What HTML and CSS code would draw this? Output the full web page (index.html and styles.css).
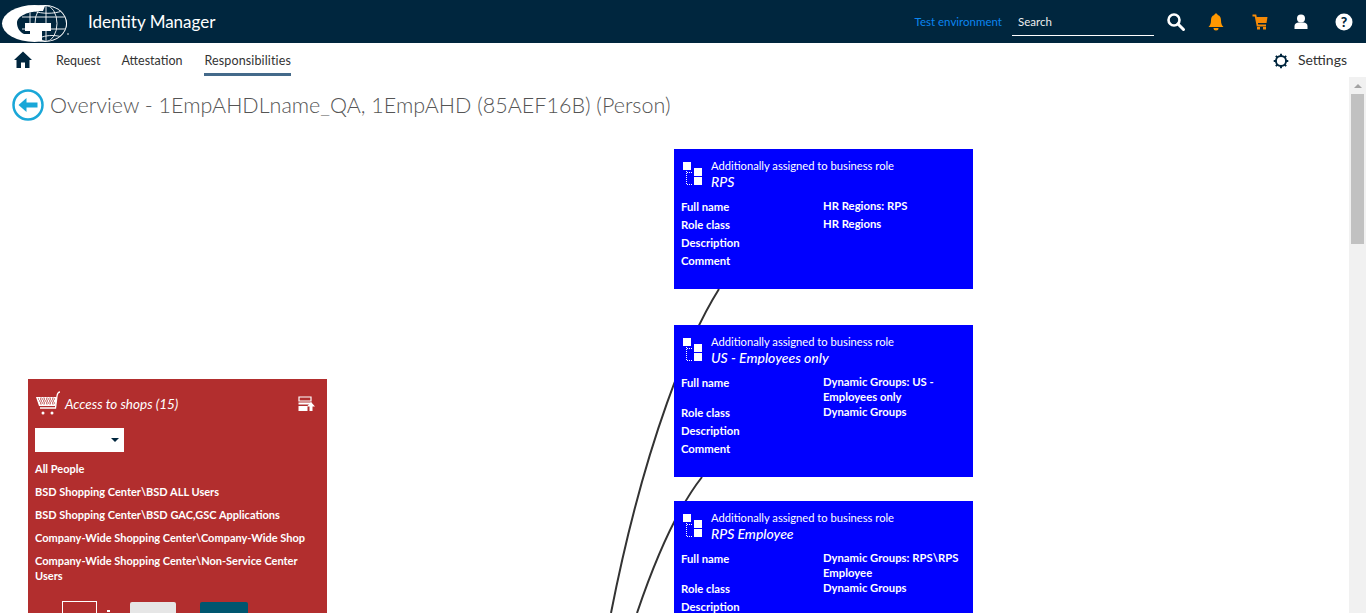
FILE: index.html
```html
<!DOCTYPE html>
<html lang="en">
<head>
  <meta charset="UTF-8">
  <title>Identity Manager</title>
  <link rel="stylesheet" href="styles.css">
</head>
<body>
  <header class="topbar">
    <svg class="logo" viewBox="0 0 70 43" width="70" height="43">
      <defs>
        <clipPath id="globe-clip">
          <path d="M45 6C57 6 66 14 66 23.500S57 41 45 41L42 40V31H30V34H24C20 32 17 28 17 23C17 16 28 11 43 11z"/>
        </clipPath>
      </defs>
      <ellipse cx="34.500" cy="23.500" rx="32.500" ry="18.500" fill="#fff"/>
      <ellipse cx="45" cy="23.500" rx="22" ry="18.500" fill="#fff"/>
      <path d="M45 6C57 6 66 14 66 23.500S57 41 45 41L42 40V31H30V34H24C20 32 17 28 17 23C17 16 28 11 43 11z" fill="#00263e"/>
      <g clip-path="url(#globe-clip)" fill="none" stroke="#fff" stroke-width="0.900">
        <ellipse cx="46" cy="23.500" rx="11" ry="18"/>
        <path d="M46 5v37M22 17h45M22 29h45M34 11c8 3 20 3 28 0M42 37c6-2 14-2 20 0M30 11v12"/>
      </g>
      <path d="M25 23h26v8H41v10H30V31h-5z" fill="#fff"/>
      <circle cx="68" cy="34" r="0.800" fill="#fff"/>
    </svg>
    <span class="app-name">Identity Manager</span>
    <span class="env-label">Test environment</span>
    <div class="search-box">Search</div>
    <nav class="top-icons">
      <svg width="20" height="20" viewBox="0 0 20 20"><circle cx="8" cy="8" r="5.500" fill="none" stroke="#fff" stroke-width="2.600"/><path d="M12 12l5.500 5.500" stroke="#fff" stroke-width="3" stroke-linecap="round"/></svg>
      <svg width="20" height="20" viewBox="2 0 20 20"><path d="M10 1.500c1 0 1.600.7 1.700 1.500 2.500.8 3.300 3 3.300 5.500 0 3 .8 5 2.500 6.500H2.500c1.700-1.500 2.500-3.500 2.500-6.500 0-2.500.8-4.700 3.300-5.500.1-.8.7-1.500 1.700-1.500z" fill="#ff9800"/><path d="M7.500 16h5a2.500 2.500 0 0 1-5 0z" fill="#ff9800"/></svg>
      <svg width="20" height="20" viewBox="0 0 20 20"><path d="M2.500 3.500h3l2 10h8.500" fill="none" stroke="#f58a07" stroke-width="1.800"/><path d="M6 5h11.500l-1 6H7z" fill="#f58a07"/><rect x="7" y="15" width="3" height="2.500" fill="#f58a07"/><rect x="13" y="15" width="3" height="2.500" fill="#f58a07"/></svg>
      <svg width="20" height="20" viewBox="1 0 20 20"><circle cx="10" cy="6.500" r="4" fill="#fff"/><path d="M3.500 17v-3c0-2 2-3.500 4-3.500h5c2 0 4 1.500 4 3.500v3z" fill="#fff"/></svg>
      <svg width="20" height="20" viewBox="0 0 20 20"><circle cx="10" cy="10" r="8.500" fill="#fff"/><text x="10" y="15" class="help-mark">?</text></svg>
    </nav>
  </header>

  <div class="subnav">
    <svg class="home" width="20" height="20" viewBox="0 0 20 20"><path d="M10 1.500L1 10h2.500v8h4.500v-5.500h4V18h4.500v-8H19z" fill="#00263e"/></svg>
    <a class="tab">Request</a>
    <a class="tab">Attestation</a>
    <a class="tab active">Responsibilities</a>
    <div class="settings">
      <svg width="16" height="16" viewBox="0 0 18 18"><circle cx="9" cy="9" r="5.700" fill="none" stroke="#00263e" stroke-width="2.200"/><path d="M9 .8v2.500M9 14.700v2.500M.8 9h2.500M14.700 9h2.500M3.200 3.200L5 5M13 13l1.800 1.800M3.200 14.800L5 13M13 5l1.800-1.800" stroke="#00263e" stroke-width="2.200"/></svg>
      <span>Settings</span>
    </div>
  </div>

  <div class="page">
    <main class="content">
      <div class="title-row">
        <svg width="34" height="34" viewBox="0 0 34 34"><circle cx="17" cy="17" r="14.500" fill="none" stroke="#1aa7d8" stroke-width="2.500"/><path d="M7.500 17l8-7v4.500h11v5h-11V24z" fill="#1aa7d8"/></svg>
        <h1>Overview - 1EmpAHDLname_QA, 1EmpAHD (85AEF16B) (Person)</h1>
      </div>

      <div class="diagram">
        <svg class="links" width="1349" height="478" viewBox="0 135 1349 478">
          <path d="M719 289C690 335 645 440 611 613" />
          <path d="M702 477C680 505 660 545 637 613" />
        </svg>

        <section class="node shops">
          <div class="shops-head">
            <svg width="26" height="26" viewBox="0 0 26 26">
              <path d="M25 1c-2 0-2.500 1-3 4l-1.500 12H5" fill="none" stroke="#fff" stroke-width="1.300"/>
              <path d="M1 6h21l-1.500 9H4z" fill="#fff"/>
              <path d="M3 8h17M4 10h16M5 12h15M6 6.500v8M9 6.500v8M12 6.500v8M15 6.500v8M18 6.500v8" stroke="#b22e2e" stroke-width="1" stroke-dasharray="1 1"/>
              <circle cx="8" cy="22" r="1.500" fill="#fff"/><circle cx="17" cy="22" r="1.500" fill="#fff"/>
            </svg>
            <h2>Access to shops (15)</h2>
            <svg class="export" width="17" height="16" viewBox="0 0 17 16">
              <path d="M1 1h12v4H1z" fill="none" stroke="#fff" stroke-width="1.200"/>
              <rect x="0.500" y="6.500" width="13" height="2" fill="#fff"/>
              <rect x="0.500" y="10" width="9" height="5" fill="#fff"/>
              <path d="M13 6l4 4.500h-2.500V15h-3v-4.500H9z" fill="#fff"/>
            </svg>
          </div>
          <div class="select-box"></div>
          <ul class="shop-list">
            <li>All People</li>
            <li>BSD Shopping Center\BSD ALL Users</li>
            <li>BSD Shopping Center\BSD GAC,GSC Applications</li>
            <li>Company-Wide Shopping Center\Company-Wide Shop</li>
            <li>Company-Wide Shopping Center\Non-Service Center Users</li>
          </ul>
          <div class="pager">
            <span class="page-box"></span>
            <span class="page-of"></span>
            <span class="page-btn"></span>
            <span class="page-btn next"></span>
          </div>
        </section>

        <section class="node role role-rps">
          <div class="role-head">
            <svg class="tree" width="20" height="24" viewBox="0 0 20 24"><use href="#tree-icon"/></svg>
            <div>
              <div class="role-type">Additionally assigned to business role</div>
              <div class="role-name">RPS</div>
            </div>
          </div>
          <dl class="role-props">
            <dt>Full name</dt><dd>HR Regions: RPS</dd>
            <dt>Role class</dt><dd>HR Regions</dd>
            <dt>Description</dt><dd></dd>
            <dt>Comment</dt><dd></dd>
          </dl>
        </section>

        <section class="node role role-us">
          <div class="role-head">
            <svg class="tree" width="20" height="24" viewBox="0 0 20 24"><use href="#tree-icon"/></svg>
            <div>
              <div class="role-type">Additionally assigned to business role</div>
              <div class="role-name">US - Employees only</div>
            </div>
          </div>
          <dl class="role-props">
            <dt>Full name</dt><dd>Dynamic Groups: US - Employees only</dd>
            <dt>Role class</dt><dd>Dynamic Groups</dd>
            <dt>Description</dt><dd></dd>
            <dt>Comment</dt><dd></dd>
          </dl>
        </section>

        <section class="node role role-emp">
          <div class="role-head">
            <svg class="tree" width="20" height="24" viewBox="0 0 20 24"><use href="#tree-icon"/></svg>
            <div>
              <div class="role-type">Additionally assigned to business role</div>
              <div class="role-name">RPS Employee</div>
            </div>
          </div>
          <dl class="role-props">
            <dt>Full name</dt><dd>Dynamic Groups: RPS\RPS Employee</dd>
            <dt>Role class</dt><dd>Dynamic Groups</dd>
            <dt>Description</dt><dd></dd>
            <dt>Comment</dt><dd></dd>
          </dl>
        </section>
      </div>
    </main>

    <div class="scrollbar">
      <span class="scroll-up"></span>
      <span class="scroll-thumb"></span>
    </div>
  </div>

  <svg class="defs" width="0" height="0">
    <symbol id="tree-icon" viewBox="0 0 20 24">
      <rect x="0" y="0" width="8" height="8" fill="#fff"/>
      <rect x="11" y="6" width="8" height="8" fill="#fff"/>
      <rect x="11" y="15" width="8" height="8" fill="#fff"/>
      <path d="M3.500 9v14M4 10.500h6M4 22.500h6" stroke="#fff" stroke-width="1" stroke-dasharray="1 1" fill="none"/>
    </symbol>
  </svg>
</body>
</html>
```

FILE: styles.css
```css
* {
  box-sizing: border-box;
}
html, body {
  height: 100%;
}
body {
  margin: 0;
  display: flex;
  flex-direction: column;
  overflow: hidden;
  font-family: Lato, "Open Sans", sans-serif;
  color: #333;
  background-color: white;
}
.defs {
  position: absolute;
}

/* top bar */
.topbar {
  height: 43px;
  flex: none;
  display: flex;
  align-items: center;
  background-color: #00263e;
  color: white;
}
.logo {
  flex: none;
}
.app-name {
  margin-left: 18px;
  font-size: 17px;
}
.env-label {
  margin-left: auto;
  font-size: 11.5px;
  color: #0b85f0;
}
.search-box {
  width: 142px;
  height: 29px;
  margin-left: 10px;
  padding: 8px 6px 0;
  border-bottom: 1px solid white;
  font-size: 11.5px;
  color: #eee;
}
.top-icons {
  display: flex;
  gap: 22px;
  margin-left: 12px;
  margin-right: 12px;
}
.help-mark {
  font-size: 14px;
  font-weight: 900;
  text-anchor: middle;
  fill: #00263e;
}

/* second row */
.subnav {
  height: 34px;
  flex: none;
  display: flex;
  align-items: flex-start;
  padding-left: 13px;
  padding-right: 19px;
}
.home {
  margin-top: 7px;
  margin-right: 23px;
}
.tab {
  height: 33px;
  margin-right: 21px;
  padding-top: 10px;
  font-size: 12.5px;
}
.tab.active {
  margin-left: 1px;
  border-bottom: 3px solid #446a8a;
  letter-spacing: 0.13px;
}
.settings {
  margin-left: auto;
  display: flex;
  align-items: flex-start;
  gap: 9px;
  padding-top: 8px;
  font-size: 14px;
  line-height: 18px;
}
.settings svg {
  margin-top: 1.500px;
}

/* page body */
.page {
  flex: 1;
  min-height: 0;
  display: flex;
}
.content {
  flex: 1;
  min-width: 0;
  display: flex;
  flex-direction: column;
}
.title-row {
  height: 58px;
  flex: none;
  display: flex;
  align-items: center;
  gap: 5px;
  padding-left: 11px;
  padding-bottom: 2px;
}
h1 {
  margin: 0;
  font-size: 21.5px;
  font-weight: 300;
  color: #555;
}
.diagram {
  flex: 1;
  position: relative;
  overflow: hidden;
}
.links {
  position: absolute;
  left: 0;
  top: 0;
}
.links path {
  fill: none;
  stroke: #333;
  stroke-width: 2;
}
.node {
  position: absolute;
  width: 299px;
  color: white;
}

/* blue role cards */
.role {
  padding: 9px 7px 20px;
  background-color: #0000ff;
  font-size: 11.3px;
}
.role-rps {
  left: 674px;
  top: 14px;
}
.role-us {
  left: 674px;
  top: 190px;
}
.role-emp {
  left: 674px;
  top: 366px;
}
.role-head {
  height: 39px;
  display: flex;
  gap: 8px;
  padding-left: 2px;
}
.tree {
  margin-top: 4px;
  flex: none;
}
.role-type {
  font-size: 11.2px;
  line-height: 15px;
}
.role-name {
  font-size: 14px;
  font-style: italic;
  font-weight: 500;
  line-height: 17px;
}
.role-props {
  display: grid;
  grid-template-columns: 142px 1fr;
  margin: 0;
}
.role-props dt {
  padding: 2px 0 1px;
  line-height: 15px;
  font-weight: 700;
}
.role-props dd {
  margin: -1px 0;
  padding-top: 2px;
  line-height: 15px;
  font-weight: 700;
}

/* red shops card */
.shops {
  left: 28px;
  top: 244px;
  height: 260px;
  padding: 12px 7px;
  background-color: #b22e2e;
  font-size: 11px;
  font-weight: 700;
}
.shops-head {
  display: flex;
  align-items: center;
  gap: 4px;
}
h2 {
  margin: 0;
  font-size: 13.5px;
  font-style: italic;
  font-weight: 400;
}
.export {
  margin-left: auto;
  margin-right: 5px;
}
.select-box {
  position: relative;
  width: 89px;
  height: 24px;
  margin-top: 11px;
  background-color: white;
}
.select-box::after {
  content: "";
  position: absolute;
  right: 5px;
  top: 10px;
  border-left: 4px solid transparent;
  border-right: 4px solid transparent;
  border-top: 4px solid #00263e;
}
.shop-list {
  list-style: none;
  margin: 9px 0 0;
  padding: 0;
}
.shop-list li {
  line-height: 15px;
  margin-bottom: 8px;
  padding-right: 10px;
}
.pager {
  display: flex;
  align-items: flex-start;
  margin-top: 18px;
  padding-left: 27px;
}
.page-box {
  width: 35px;
  height: 30px;
  border: 1px solid white;
}
.page-of {
  width: 3px;
  height: 2px;
  margin: 9px 20px 0 10px;
  background-color: white;
}
.page-btn {
  width: 46px;
  height: 30px;
  margin-top: 1px;
  margin-right: 24px;
  border-radius: 2px;
  background-color: #e6e6e6;
}
.page-btn.next {
  width: 48px;
  background-color: #00566f;
}

/* scrollbar */
.scrollbar {
  width: 17px;
  flex: none;
  display: flex;
  flex-direction: column;
  align-items: center;
  background-color: #f1f1f1;
}
.scroll-up {
  margin-top: 7px;
  border-left: 4px solid transparent;
  border-right: 4px solid transparent;
  border-bottom: 4px solid #a3a3a3;
}
.scroll-thumb {
  width: 13px;
  height: 150px;
  margin-top: 6px;
  background-color: #c1c1c1;
}
```
